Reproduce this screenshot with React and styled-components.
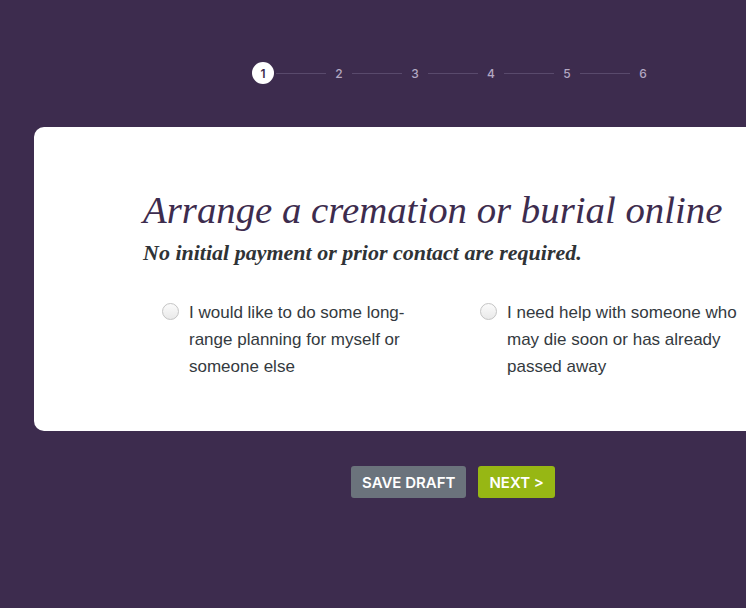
import React from 'react'
import styled, { createGlobalStyle } from 'styled-components'

const GlobalStyle = createGlobalStyle`
html, body {
    margin: 0;
    padding: 0;
    background: #3d2c4e;
    height: 608px;
    overflow: hidden;
}
`

const steps = [1, 2, 3, 4, 5, 6]

const options = [
    'I would like to do some long-range planning for myself or someone else',
    'I need help with someone who may die soon or has already passed away',
]

function App() {
    return (
        <Page>
            <GlobalStyle />
            <Steps>
                {steps.map((n, i) => (
                    <React.Fragment key={n}>
                        {i > 0 && <StepLine />}
                        <StepNode active={i === 0}>{n}</StepNode>
                    </React.Fragment>
                ))}
            </Steps>

            <Card>
                <Inner>
                    <Title>Arrange a cremation or burial online</Title>
                    <Subtitle>No initial payment or prior contact are required.</Subtitle>
                    <Choices>
                        {options.map((text, index) => (
                            <Choice key={index}>
                                <Radio />
                                <ChoiceText>{text}</ChoiceText>
                            </Choice>
                        ))}
                    </Choices>
                </Inner>
            </Card>

            <Actions>
                <Button kind="secondary">Save Draft</Button>
                <Button kind="primary">Next &gt;</Button>
            </Actions>
        </Page>
    )
}

export default App

const Page = styled.div`
width: 906px;
padding-top: 62px;
display: flex;
flex-direction: column;
align-items: center;
font-family: "Liberation Sans", Roboto, sans-serif;
`
const Steps = styled.div`
display: flex;
align-items: center;
height: 22px;
`
const StepNode = styled.div`
width: 22px;
height: 22px;
border-radius: 50%;
display: flex;
align-items: center;
justify-content: center;
font-size: 12px;
font-family: Inter, Roboto, sans-serif;
font-weight: ${props => props.active ? 600 : 500};
background: ${props => props.active ? '#ffffff' : 'transparent'};
color: ${props => props.active ? '#3d2c4e' : '#b3a8c2'};
`
const StepLine = styled.div`
width: 50px;
height: 1px;
margin: 0 2px;
background: #594a6c;
`
const Card = styled.div`
margin-top: 43px;
width: 838px;
height: 304px;
box-sizing: border-box;
background: #ffffff;
border-radius: 10px;
padding-top: 58px;
display: flex;
justify-content: center;
`
const Inner = styled.div`
width: 620px;
`
const Title = styled.h1`
margin: 0;
font-family: "Liberation Serif", serif;
font-style: italic;
font-weight: 400;
font-size: 38.8px;
line-height: 50px;
color: #3d2c4e;
white-space: nowrap;
`
const Subtitle = styled.h2`
margin: 4px 0 0;
font-family: "Liberation Serif", serif;
font-style: italic;
font-weight: 700;
font-size: 22px;
line-height: 28px;
color: #2f3336;
`
const Choices = styled.div`
display: grid;
grid-template-columns: 318px 318px;
padding-left: 19px;
margin-top: 32px;
`
const Choice = styled.label`
display: flex;
align-items: flex-start;
gap: 10px;
`
const Radio = styled.span`
flex: none;
width: 17px;
height: 17px;
margin-top: 4px;
box-sizing: border-box;
border-radius: 50%;
border: 1px solid #c4c4c4;
background: linear-gradient(#fbfbfb, #e9e9e9);
`
const ChoiceText = styled.span`
width: 245px;
font-size: 17px;
line-height: 27px;
color: #343a40;
`
const Actions = styled.div`
margin-top: 35px;
display: flex;
gap: 12px;
`
const Button = styled.button`
height: 32px;
padding: 0 11px;
border: none;
border-radius: 3px;
font-family: Inter, Roboto, sans-serif;
font-size: 15px;
font-weight: 600;
text-transform: uppercase;
color: #ffffff;
background: ${props => props.kind === 'primary' ? '#97b714' : '#6b737c'};
`
